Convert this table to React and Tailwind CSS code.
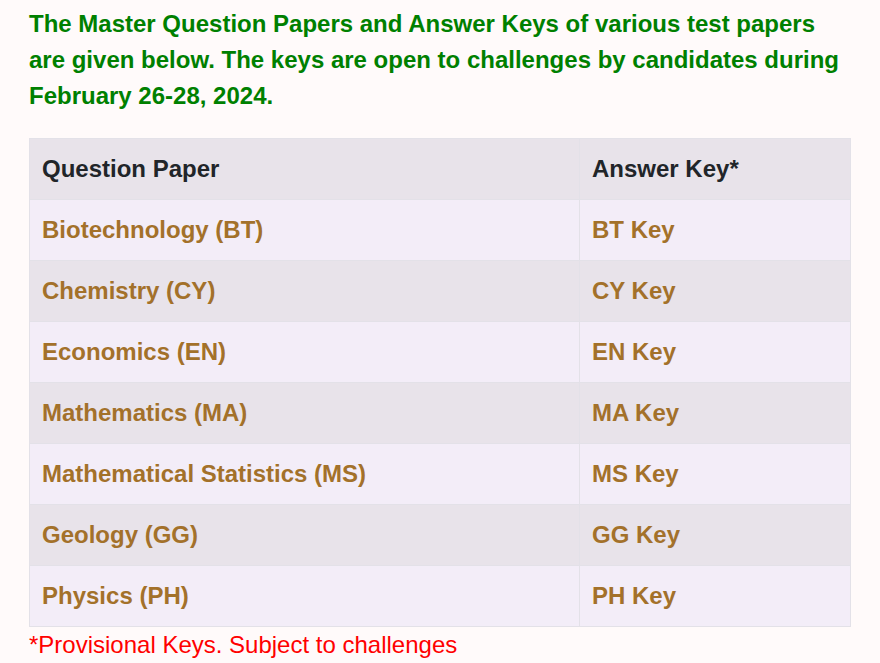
const rows = [
  ['Biotechnology (BT)', 'BT Key'],
  ['Chemistry (CY)', 'CY Key'],
  ['Economics (EN)', 'EN Key'],
  ['Mathematics (MA)', 'MA Key'],
  ['Mathematical Statistics (MS)', 'MS Key'],
  ['Geology (GG)', 'GG Key'],
  ['Physics (PH)', 'PH Key'],
]

export default function App() {
  return (
    <div className="min-h-[663px] bg-[#fffafa] px-[29px] pt-[6px] font-['Liberation_Sans',Arial,sans-serif]">
      <p className="w-[821px] text-[24px] font-bold leading-[36px] text-[#008000]">
        The Master Question Papers and Answer Keys of various test papers are given below. The keys are open to challenges by candidates during February 26-28, 2024.
      </p>

      <table className="mt-[24px] w-[822px] border-collapse text-[24px] font-bold">
        <thead>
          <tr className="h-[61px] bg-[#e8e3ea] text-[#212529]">
            <th className="w-[550px] border border-[#e3e1e8] px-3 text-left">Question Paper</th>
            <th className="border border-[#e3e1e8] px-3 text-left">Answer Key*</th>
          </tr>
        </thead>
        <tbody>
          {rows.map(([paper, key], i) => (
            <tr key={paper} className={`h-[61px] text-[#a3712a] ${i % 2 === 0 ? 'bg-[#f3edf8]' : 'bg-[#e8e3ea]'}`}>
              <td className="border border-[#e3e1e8] px-3">{paper}</td>
              <td className="border border-[#e3e1e8] px-3">{key}</td>
            </tr>
          ))}
        </tbody>
      </table>

      <p className="text-[24px] leading-[36px] text-[#ff0000]">*Provisional Keys. Subject to challenges</p>
    </div>
  )
}
